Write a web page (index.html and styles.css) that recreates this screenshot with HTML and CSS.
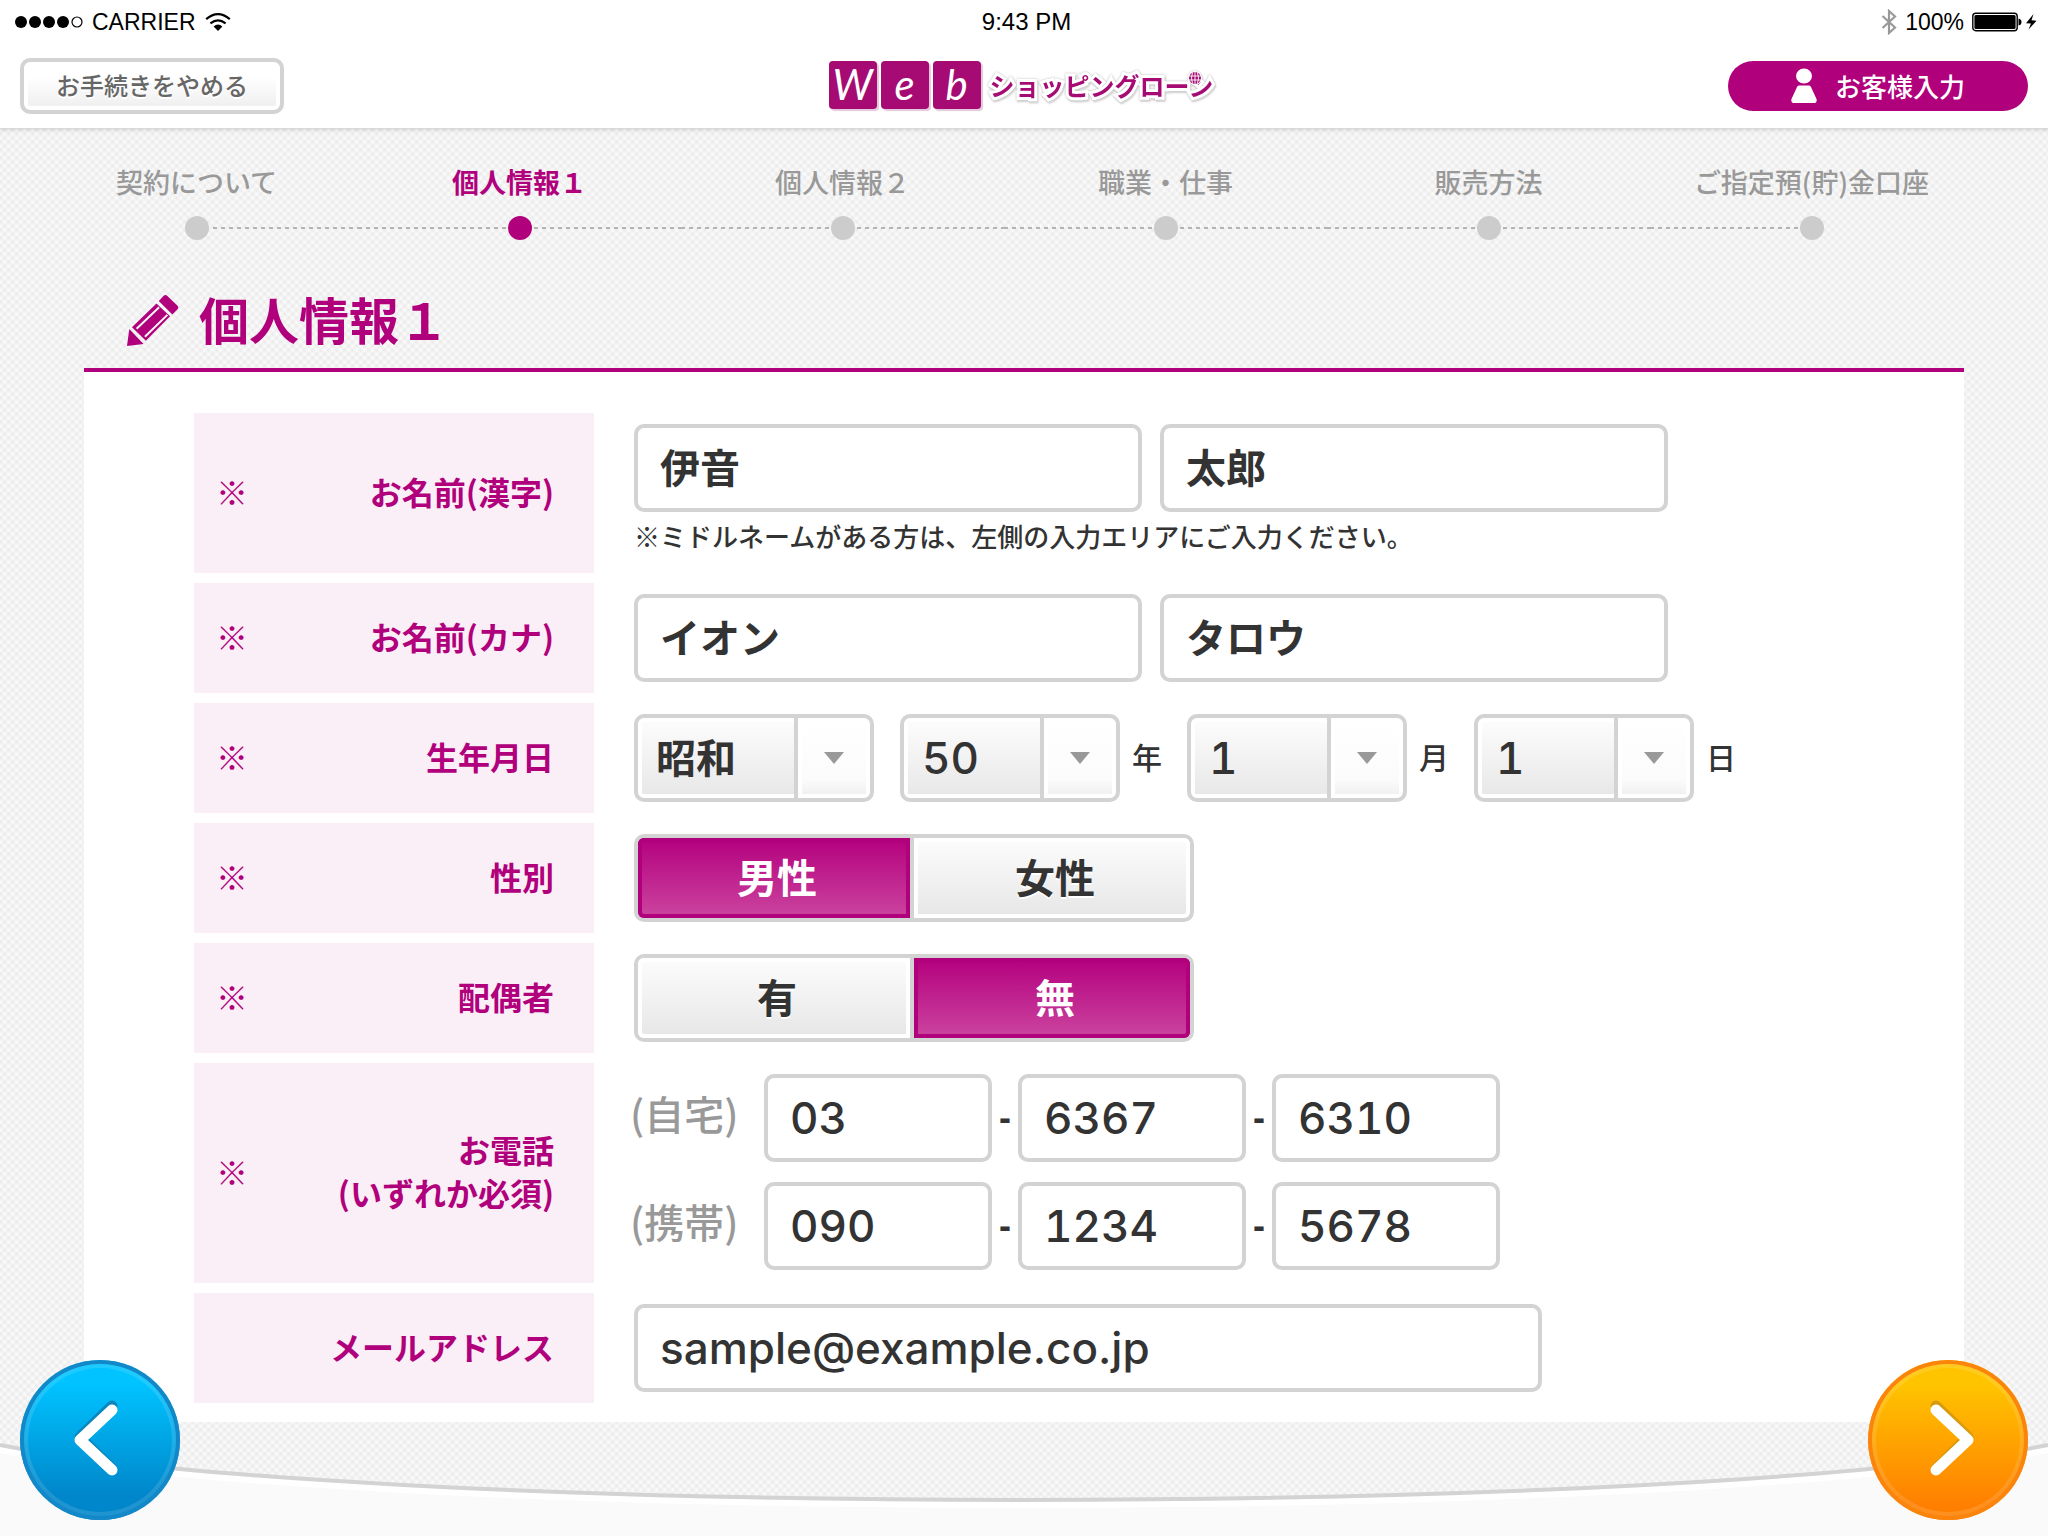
FILE: index.html
```html
<!DOCTYPE html>
<html lang="ja">
<head>
<meta charset="utf-8">
<meta name="viewport" content="width=device-width, initial-scale=1">
<title>Webショッピングローン</title>
<link rel="stylesheet" href="styles.css">
</head>
<body>
<header class="header">
  <div class="status">
    <div class="status-side">
      <svg class="signal" viewBox="0 0 68 12" aria-hidden="true"><circle cx="6" cy="6" r="6"/><circle cx="20" cy="6" r="6"/><circle cx="34" cy="6" r="6"/><circle cx="48" cy="6" r="6"/><circle cx="62" cy="6" r="5" fill="none" stroke="#000" stroke-width="1.2"/></svg>
      <span>CARRIER</span>
      <svg class="wifi" viewBox="0 0 26 18" aria-hidden="true"><g fill="none" stroke="#000" stroke-width="2.2"><path d="M1.2 6.2Q13-3.8 24.8 6.2"/><path d="M5.4 10.4Q13 4.2 20.6 10.4"/></g><path d="M8.6 13.4Q13 9.8 17.4 13.4L13 18z"/></svg>
    </div>
    <time class="status-time">9:43 PM</time>
    <div class="status-side status-right">
      <svg class="bluetooth" viewBox="0 0 16 26" fill="none" stroke="#999" stroke-width="2.2" aria-hidden="true"><path d="M1.500 7L14 18.500 8 24V2l6 5.500L1.500 19"/></svg>
      <span>100%</span>
      <svg class="battery" viewBox="0 0 66 20" aria-hidden="true"><rect x=".8" y="1.3" width="44.4" height="17.4" rx="3" fill="none" stroke="#000" stroke-width="1.4"/><rect x="2.4" y="2.9" width="41.2" height="14.2" rx="1.5"/><path d="M46.500 6.500q3 .5 3 3.500t-3 3.500z"/><path d="M61.500 2L54 11.200l5 .3L56.500 17.500 64.500 8.800 59.500 8.300z"/></svg>
    </div>
  </div>
  <div class="toolbar">
    <button class="quit" type="button">お手続きをやめる</button>
    <div class="logo">
      <span class="tile">W</span><span class="tile">e</span><span class="tile">b</span>
      <span class="logo-name">ショッピングローン<svg class="globe" viewBox="0 0 14 14" aria-hidden="true"><circle cx="7" cy="7" r="7" fill="#fff"/><circle cx="7" cy="7" r="6" fill="#a50b72"/><path d="M1 5h12M1 9h12M7 1v12M4.500 1.500q-2 5.500 0 11M9.500 1.500q2 5.500 0 11" fill="none" stroke="#fff" stroke-width=".9"/></svg></span>
    </div>
    <button class="customer" type="button">
      <svg class="person" viewBox="0 0 26 36" fill="#fff" aria-hidden="true"><ellipse cx="13" cy="8" rx="8" ry="7.500"/><path d="M8 17.500h10q1.500 0 2 1.500l5.500 12q1 4-3 4h-19q-4 0-3-4l5.500-12q.5-1.500 2-1.500z"/></svg>
      <span>お客様入力</span>
    </button>
  </div>
</header>

<main class="main">
  <ol class="steps">
    <li class="step"><span>契約について</span><span class="marker"></span></li>
    <li class="step current" aria-current="step"><span>個人情報１</span><span class="marker"></span></li>
    <li class="step"><span>個人情報２</span><span class="marker"></span></li>
    <li class="step"><span>職業・仕事</span><span class="marker"></span></li>
    <li class="step"><span>販売方法</span><span class="marker"></span></li>
    <li class="step"><span>ご指定預(貯)金口座</span><span class="marker"></span></li>
  </ol>

  <div class="title">
    <svg class="pencil" viewBox="50 46 160 160" fill="#b1007c" aria-hidden="true"><path d="M60 152L103 197 53 203z"/><path d="M149 67l14-15q6-6 12 0l30 29q6 6 0 12l-15 15z"/><path d="M68 146L142 75 183 113 110 187z"/><path d="M82 151L150 86M107 175L175 109" fill="none" stroke="#f6f6f6" stroke-width="6"/></svg>
    <h1>個人情報１</h1>
  </div>

  <form class="panel">
    <div class="row tall">
      <div class="head"><span class="mark">※</span><label for="sei">お名前(漢字)</label></div>
      <div class="body">
        <div class="line pair"><input class="text name" id="sei" value="伊音"><input class="text name" aria-label="名(漢字)" value="太郎"></div>
        <p class="note">※ミドルネームがある方は、左側の入力エリアにご入力ください。</p>
      </div>
    </div>
    <div class="row">
      <div class="head"><span class="mark">※</span><label for="kana">お名前(カナ)</label></div>
      <div class="body"><div class="line pair"><input class="text name" id="kana" value="イオン"><input class="text name" aria-label="名(カナ)" value="タロウ"></div></div>
    </div>
    <div class="row">
      <div class="head"><span class="mark">※</span><label for="era">生年月日</label></div>
      <div class="body"><div class="line">
        <span class="pick era"><select id="era"><option>昭和</option></select></span>
        <span class="pick"><select id="year" class="num"><option>50</option></select></span><label class="unit" for="year">年</label>
        <span class="pick"><select id="month" class="num"><option>1</option></select></span><label class="unit" for="month">月</label>
        <span class="pick"><select id="day" class="num"><option>1</option></select></span><label class="unit" for="day">日</label>
      </div></div>
    </div>
    <div class="row">
      <div class="head"><span class="mark">※</span><span id="sex-label">性別</span></div>
      <div class="body"><div class="segment" role="radiogroup" aria-labelledby="sex-label">
        <label class="choice"><input type="radio" name="sex" checked>男性</label>
        <label class="choice"><input type="radio" name="sex">女性</label>
      </div></div>
    </div>
    <div class="row">
      <div class="head"><span class="mark">※</span><span id="spouse-label">配偶者</span></div>
      <div class="body"><div class="segment" role="radiogroup" aria-labelledby="spouse-label">
        <label class="choice"><input type="radio" name="spouse">有</label>
        <label class="choice"><input type="radio" name="spouse" checked>無</label>
      </div></div>
    </div>
    <div class="row double">
      <div class="head"><span class="mark">※</span><span>お電話<br>(いずれか必須)</span></div>
      <div class="body phones">
        <div class="line"><label class="kind" for="home">(自宅)</label><input class="text num tel" id="home" type="tel" value="03"><span class="dash">-</span><input class="text num tel" type="tel" aria-label="自宅 市内局番" value="6367"><span class="dash">-</span><input class="text num tel" type="tel" aria-label="自宅 加入者番号" value="6310"></div>
        <div class="line"><label class="kind" for="mobile">(携帯)</label><input class="text num tel" id="mobile" type="tel" value="090"><span class="dash">-</span><input class="text num tel" type="tel" aria-label="携帯 中央4桁" value="1234"><span class="dash">-</span><input class="text num tel" type="tel" aria-label="携帯 下4桁" value="5678"></div>
      </div>
    </div>
    <div class="row">
      <div class="head"><label for="email">メールアドレス</label></div>
      <div class="body"><input class="text num email" id="email" type="email" value="sample@example.co.jp"></div>
    </div>
  </form>
</main>

<footer class="footer">
  <svg class="curve" viewBox="0 0 2048 96" preserveAspectRatio="none" aria-hidden="true"><path d="M0 5A1098 86 0 0 0 2048 5V96H0z" fill="#fafafa"/><path d="M0 10A1098 86 0 0 0 2048 10" fill="none" stroke="#fff" stroke-width="6"/><path d="M0 5A1098 86 0 0 0 2048 5" fill="none" stroke="#d3d3d3" stroke-width="4"/></svg>
  <button class="nav back" type="button" aria-label="戻る"><svg viewBox="0 0 160 160" fill="none" stroke-width="11" stroke-linecap="round" stroke-linejoin="round"><path d="M92 46L60 77 92 109" stroke="#0a86bd"/><path d="M92 50L60 80 92 110" stroke="#fff"/></svg></button>
  <button class="nav next" type="button" aria-label="次へ"><svg viewBox="0 0 160 160" fill="none" stroke-width="11" stroke-linecap="round" stroke-linejoin="round"><path d="M68 46L100 77 68 109" stroke="#d69a0c"/><path d="M68 50L100 80 68 110" stroke="#fff"/></svg></button>
</footer>
</body>
</html>
```
FILE: styles.css
```css
:root {
  --accent: #b1007c;
  --line: #d3d3d3;
  --jp: "Noto Sans CJK JP", sans-serif;
}

* { box-sizing: border-box; }

body {
  margin: 0;
  min-height: 100vh;
  display: flex;
  flex-direction: column;
  position: relative;
  font-family: var(--jp);
  color: #333;
  background-color: #f9f9f9;
  background-image:
    linear-gradient(45deg, rgba(0, 0, 0, .025) 25%, transparent 25% 50%, rgba(0, 0, 0, .025) 50% 75%, transparent 75%),
    linear-gradient(-45deg, rgba(0, 0, 0, .025) 25%, transparent 25% 50%, rgba(0, 0, 0, .025) 50% 75%, transparent 75%);
  background-size: 8px 8px;
}

button, input, select { font: inherit; color: inherit; margin: 0; }
svg { display: block; }

/* Header */
.header {
  background: #fff;
  box-shadow: 0 0 4px 2px rgba(0, 0, 0, .14);
}
.status, .toolbar {
  display: grid;
  grid-template-columns: 1fr auto 1fr;
  align-items: center;
}
.status {
  height: 44px;
  padding: 0 10px 0 15px;
  font: 23px/44px "Liberation Sans", sans-serif;
  color: #000;
}
.status-side { display: flex; align-items: center; gap: 9px; }
.status-right { justify-content: flex-end; gap: 8px; }
.status-time { font-size: 24px; line-height: 40px; }
.signal { width: 68px; height: 12px; }
.wifi { width: 26px; height: 18px; }
.bluetooth { width: 16px; height: 26px; }
.battery { width: 66px; height: 20px; }

.toolbar { height: 84px; padding: 0 20px; }
.quit {
  justify-self: start;
  width: 264px;
  height: 56px;
  padding: 0 0 4px;
  border: 4px solid var(--line);
  border-radius: 10px;
  background: linear-gradient(#fff 30%, #eee);
  box-shadow: inset 0 0 0 4px #fff;
  font-size: 24px;
  font-weight: 500;
  color: #666;
  text-shadow: 0 2px 0 #fff;
}
.logo {
  display: flex;
  align-items: center;
  gap: 4px;
  padding: 0 6px 2px 0;
}
.tile {
  width: 48px;
  height: 48px;
  border-radius: 4px;
  background: #a50b72;
  box-shadow: 2px 2px 1px #e3c8da;
  color: #fff;
  font: italic 42px/46px Lato, sans-serif;
  text-align: center;
}
.logo-name {
  position: relative;
  margin-left: 5px;
  font-size: 25px;
  font-weight: 700;
  color: #a50b72;
  -webkit-text-stroke: 6px #fff;
  paint-order: stroke fill;
  filter: drop-shadow(0 0 1px #bbb) drop-shadow(1px 2px 0 #ddd);
}
.globe { position: absolute; top: 4px; right: 11px; width: 14px; height: 14px; }
.customer {
  justify-self: end;
  display: flex;
  align-items: center;
  justify-content: center;
  gap: 18px;
  width: 300px;
  height: 50px;
  padding: 0;
  border: 0;
  border-radius: 25px;
  background: var(--accent);
  color: #fff;
  font-size: 26px;
  font-weight: 500;
}
.customer span { padding-bottom: 2px; }
.person { width: 26px; height: 36px; }

/* Progress */
.main { padding: 0 84px 18px; }
.steps {
  display: grid;
  grid-template-columns: repeat(6, 1fr);
  margin: 0 -9px 0 -49px;
  padding: 36px 0 0;
  list-style: none;
}
.step {
  display: flex;
  flex-direction: column;
  gap: 16px;
  font-size: 27px;
  font-weight: 500;
  line-height: 36px;
  color: #999;
  text-align: center;
  white-space: nowrap;
}
.marker {
  display: flex;
  justify-content: center;
  background: repeating-linear-gradient(to right, #b3b3b3 0 4px, transparent 4px 8px) center / 100% 2px no-repeat;
}
.step:first-child .marker { background-position: right; background-size: 50% 2px; }
.step:last-child .marker { background-position: left; background-size: 50% 2px; }
.marker::before {
  content: "";
  width: 24px;
  height: 24px;
  border-radius: 50%;
  background: #ccc;
}
.current { color: var(--accent); font-weight: 700; }
.current .marker::before { background: var(--accent); }

.title {
  display: flex;
  align-items: center;
  gap: 20px;
  height: 128px;
  padding: 32px 0 0 42px;
}
.title h1 {
  margin: 0;
  padding-bottom: 4px;
  font-size: 50px;
  line-height: 60px;
  font-weight: 700;
  color: var(--accent);
}
.pencil { width: 53px; height: 53px; }

/* Form */
.panel {
  display: flex;
  flex-direction: column;
  gap: 10px;
  padding: 41px 110px 19px;
  border-top: 4px solid var(--accent);
  background: #fff;
}
.row {
  display: grid;
  grid-template-columns: 400px 1fr;
  column-gap: 40px;
  min-height: 110px;
}
.tall { min-height: 160px; }
.double { min-height: 220px; }
.head {
  display: flex;
  align-items: center;
  justify-content: flex-end;
  padding: 0 40px 4px 22px;
  background: #faeff7;
  color: var(--accent);
  font-size: 32px;
  line-height: 43px;
  font-weight: 700;
  text-align: right;
}
.mark { margin-right: auto; font-weight: 400; }
.body { padding: 11px 0; }
.line { display: flex; align-items: center; }
.pair { gap: 18px; }
.note {
  margin: 6px 0 0;
  font-size: 26px;
  line-height: 36px;
  font-weight: 500;
}
.text {
  height: 88px;
  padding: 0 22px 4px;
  border: 4px solid var(--line);
  border-radius: 10px;
  background: #fff;
  font-size: 40px;
  font-weight: 700;
}
.name { width: 508px; }
.tel { width: 228px; font-variant-numeric: tabular-nums; }
.email { width: 908px; }
.num {
  padding-bottom: 0;
  font-family: Inter, var(--jp);
  font-size: 44px;
  font-weight: 500;
}

.pick { display: grid; align-items: center; width: 220px; }
.era { width: 240px; margin-right: 26px; }
.pick select, .pick::after { grid-area: 1 / 1; }
.pick select {
  appearance: none;
  width: 100%;
  height: 88px;
  padding: 0 80px 4px 18px;
  border: 4px solid var(--line);
  border-radius: 10px;
  background:
    linear-gradient(var(--line), var(--line)) right 72px top 0 / 4px 100% no-repeat,
    linear-gradient(#fcfcfc, #e8e8e8) left 4px top 4px / calc(100% - 80px) calc(100% - 8px) no-repeat,
    linear-gradient(#fff, #fbfbfb 80%, #f1f1f1) right 4px top 4px / 64px calc(100% - 8px) no-repeat,
    #fff;
  font-size: 40px;
  font-weight: 700;
}
.pick select.num {
  padding-bottom: 0;
  font-size: 44px;
  font-weight: 500;
  font-variant-numeric: tabular-nums;
}
.pick::after {
  content: "";
  justify-self: end;
  width: 20px;
  height: 12px;
  margin-right: 30px;
  background: #999;
  clip-path: polygon(0 0, 100% 0, 50% 100%);
  pointer-events: none;
}
.unit {
  margin: 0 25px 0 12px;
  padding-bottom: 4px;
  font-size: 30px;
  font-weight: 500;
}

.segment {
  display: grid;
  grid-template-columns: 272px 1fr;
  gap: 4px;
  width: 560px;
  height: 88px;
  border: 4px solid var(--line);
  border-radius: 10px;
  background: var(--line);
}
.choice {
  display: flex;
  align-items: center;
  justify-content: center;
  padding: 0 0 4px 6px;
  background: linear-gradient(#fdfdfd, #e6e6e6);
  box-shadow: inset 0 0 0 4px #fff;
  font-size: 40px;
  font-weight: 700;
  text-shadow: 0 2px 0 #fff;
}
.choice:first-child { border-radius: 6px 0 0 6px; }
.choice:last-child { border-radius: 0 6px 6px 0; }
.choice:has(:checked) {
  background: linear-gradient(#b4007e, #cb459f);
  box-shadow: inset 0 0 0 4px var(--accent);
  color: #fff;
  text-shadow: none;
}
.choice input { appearance: none; width: 0; height: 0; }

.phones { display: flex; flex-direction: column; gap: 20px; }
.kind {
  width: 134px;
  margin-left: -4px;
  padding-bottom: 10px;
  font-size: 40px;
  font-weight: 500;
  color: #999;
}
.dash {
  width: 26px;
  font: 700 36px/40px "Liberation Sans", sans-serif;
  text-align: center;
}

/* Footer */
.footer { margin-top: auto; }
.curve { width: 100%; height: 96px; }
.nav {
  position: absolute;
  bottom: 16px;
  width: 160px;
  height: 160px;
  padding: 0;
  border: 0;
  border-radius: 50%;
}
.back {
  left: 20px;
  background: linear-gradient(#00c3ff 15%, #0086ca 85%);
  box-shadow: inset 0 0 0 4px #1288c8, inset 0 0 0 8px rgba(255, 255, 255, .12);
}
.next {
  right: 20px;
  background: linear-gradient(#ffc400 15%, #ff8000 90%);
  box-shadow: inset 0 0 0 4px #fb840c, inset 0 0 0 8px rgba(255, 255, 255, .12);
}
```
